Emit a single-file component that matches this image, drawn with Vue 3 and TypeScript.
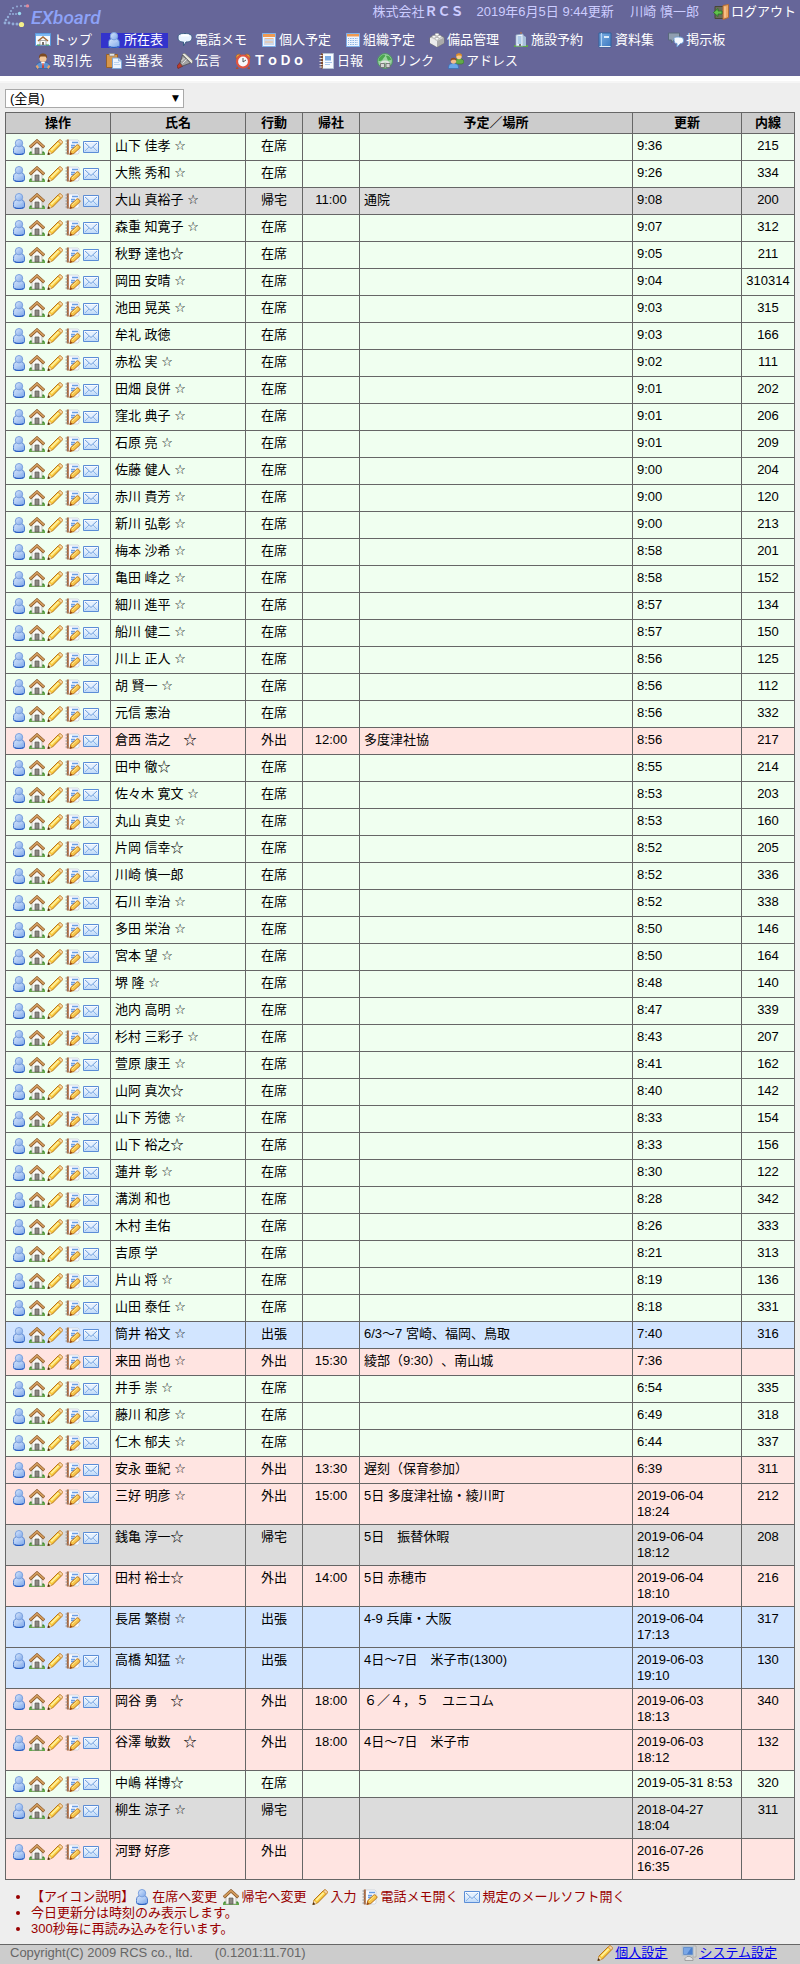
<script setup lang="ts">
import { ref } from 'vue'

type State = '在席' | '帰宅' | '外出' | '出張'
interface Member {
  name: string
  state: State
  back: string
  plan: string
  updated: string
  ext: string
  mail: boolean
}
interface NavItem {
  icon: string
  label: string
  active?: boolean
  strong?: boolean
}

const navRows: NavItem[][] = [
  [
    { icon: 'top', label: 'トップ' },
    { icon: 'person', label: '所在表', active: true },
    { icon: 'balloon', label: '電話メモ' },
    { icon: 'calendar', label: '個人予定' },
    { icon: 'group-calendar', label: '組織予定' },
    { icon: 'brick', label: '備品管理' },
    { icon: 'building', label: '施設予約' },
    { icon: 'book', label: '資料集' },
    { icon: 'talk', label: '掲示板' },
  ],
  [
    { icon: 'client', label: '取引先' },
    { icon: 'clipboard', label: '当番表' },
    { icon: 'torch', label: '伝言' },
    { icon: 'alarm', label: 'ＴｏＤｏ', strong: true },
    { icon: 'report', label: '日報' },
    { icon: 'globe', label: 'リンク' },
    { icon: 'people', label: 'アドレス' },
  ],
]

const actions = [
  { icon: 'person', label: '在席へ変更' },
  { icon: 'house', label: '帰宅へ変更' },
  { icon: 'pencil', label: '入力' },
  { icon: 'memo', label: '電話メモ開く' },
]
const legend = [...actions, { icon: 'mail', label: '規定のメールソフト開く' }]

const group = ref('all')

const m = (
  name: string,
  updated: string,
  ext: string,
  state: State = '在席',
  back = '',
  plan = '',
  mail = true,
): Member => ({ name, state, back, plan, updated, ext, mail })

// A "*" at the end of a name stands for the small star mark.
const members: Member[] = [
  m('山下 佳孝 *', '9:36', '215'),
  m('大熊 秀和 *', '9:26', '334'),
  m('大山 真裕子 *', '9:08', '200', '帰宅', '11:00', '通院'),
  m('森重 知寛子 *', '9:07', '312'),
  m('秋野 達也☆', '9:05', '211'),
  m('岡田 安晴 *', '9:04', '310314'),
  m('池田 晃英 *', '9:03', '315'),
  m('牟礼 政徳', '9:03', '166'),
  m('赤松 実 *', '9:02', '111'),
  m('田畑 良併 *', '9:01', '202'),
  m('窪北 典子 *', '9:01', '206'),
  m('石原 亮 *', '9:01', '209'),
  m('佐藤 健人 *', '9:00', '204'),
  m('赤川 貴芳 *', '9:00', '120'),
  m('新川 弘彰 *', '9:00', '213'),
  m('梅本 沙希 *', '8:58', '201'),
  m('亀田 峰之 *', '8:58', '152'),
  m('細川 進平 *', '8:57', '134'),
  m('船川 健二 *', '8:57', '150'),
  m('川上 正人 *', '8:56', '125'),
  m('胡 賢一 *', '8:56', '112'),
  m('元信 憲治', '8:56', '332'),
  m('倉西 浩之　☆', '8:56', '217', '外出', '12:00', '多度津社協'),
  m('田中 徹☆', '8:55', '214'),
  m('佐々木 寛文 *', '8:53', '203'),
  m('丸山 真史 *', '8:53', '160'),
  m('片岡 信幸☆', '8:52', '205'),
  m('川崎 慎一郎', '8:52', '336'),
  m('石川 幸治 *', '8:52', '338'),
  m('多田 栄治 *', '8:50', '146'),
  m('宮本 望 *', '8:50', '164'),
  m('堺 隆 *', '8:48', '140'),
  m('池内 高明 *', '8:47', '339'),
  m('杉村 三彩子 *', '8:43', '207'),
  m('萱原 康王 *', '8:41', '162'),
  m('山阿 真次☆', '8:40', '142'),
  m('山下 芳徳 *', '8:33', '154'),
  m('山下 裕之☆', '8:33', '156'),
  m('蓮井 彰 *', '8:30', '122'),
  m('溝渕 和也', '8:28', '342'),
  m('木村 圭佑', '8:26', '333'),
  m('吉原 学', '8:21', '313'),
  m('片山 将 *', '8:19', '136'),
  m('山田 泰任 *', '8:18', '331'),
  m('筒井 裕文 *', '7:40', '316', '出張', '', '6/3～7 宮崎、福岡、鳥取'),
  m('来田 尚也 *', '7:36', '', '外出', '15:30', '綾部（9:30）、南山城'),
  m('井手 崇 *', '6:54', '335'),
  m('藤川 和彦 *', '6:49', '318'),
  m('仁木 郁夫 *', '6:44', '337'),
  m('安永 亜紀 *', '6:39', '311', '外出', '13:30', '遅刻（保育参加）'),
  m('三好 明彦 *', '2019-06-04 18:24', '212', '外出', '15:00', '5日 多度津社協・綾川町'),
  m('銭亀 淳一☆', '2019-06-04 18:12', '208', '帰宅', '', '5日　振替休暇'),
  m('田村 裕士☆', '2019-06-04 18:10', '216', '外出', '14:00', '5日 赤穂市'),
  m('長居 繁樹 *', '2019-06-04 17:13', '317', '出張', '', '4-9 兵庫・大阪', false),
  m('高橋 知猛 *', '2019-06-03 19:10', '130', '出張', '', '4日～7日　米子市(1300)'),
  m('岡谷 勇　☆', '2019-06-03 18:13', '340', '外出', '18:00', '６／４，５　ユニコム'),
  m('谷澤 敏数　☆', '2019-06-03 18:12', '132', '外出', '18:00', '4日～7日　米子市'),
  m('中嶋 祥博☆', '2019-05-31 8:53', '320'),
  m('柳生 涼子 *', '2018-04-27 18:04', '311', '帰宅'),
  m('河野 好彦', '2016-07-26 16:35', '', '外出'),
]

const rowClass: Record<State, string> = {
  在席: 'present',
  帰宅: 'home',
  外出: 'out',
  出張: 'trip',
}
</script>

<template>
  <div class="page">
    <svg class="sprite" aria-hidden="true">
      <defs>
        <linearGradient id="g-blue" x1="0" y1="0" x2="1" y2="1">
          <stop offset="0" stop-color="#dbe9fc" />
          <stop offset="1" stop-color="#7ba6ea" />
        </linearGradient>
        <linearGradient id="g-mail" x1="0" y1="0" x2="0" y2="1">
          <stop offset="0" stop-color="#ffffff" />
          <stop offset="1" stop-color="#bcd8f8" />
        </linearGradient>
        <linearGradient id="g-book" x1="0" y1="0" x2="1" y2="1">
          <stop offset="0" stop-color="#7fb0e4" />
          <stop offset="1" stop-color="#3c78c0" />
        </linearGradient>
      </defs>
      <symbol id="i-person" viewBox="0 0 16 16">
        <path d="M5.500 6.500C3 7.500 2.500 9 2.500 11.500V13c0 2 1.500 2.500 3.500 2.500h4.500c2 0 3-.8 3-2.500v-2c0-2-1-3.700-3-4.500z" fill="url(#g-blue)" stroke="#4c7bce" />
        <circle cx="8" cy="4.200" r="3.700" fill="url(#g-blue)" stroke="#7ba1de" />
        <path d="M3.500 14.500c2 1.200 7 1.200 9 0" fill="none" stroke="#1f55bd" />
        <path d="M5 9c1.500 1.500 4.500 1.500 6 0" fill="none" stroke="#b7d0f6" />
      </symbol>
      <symbol id="i-house" viewBox="0 0 16 16">
        <path d="M0 14h16v2H0z" fill="#63a64a" />
        <path d="M0 14l2-2 2 2zM12 14l2-2 2 2z" fill="#3f8c34" />
        <path d="M3 7.500L8 3l5 4.500V15H3z" fill="#f7f7f4" stroke="#a9a9a0" stroke-width=".7" />
        <path d="M6 9h4v6H6z" fill="#8d8983" stroke="#5c5a55" stroke-width=".7" />
        <path d="M.8 8.300L8 1.900l7.200 6.400" fill="none" stroke="#7b4a1e" stroke-width="3" />
        <path d="M1 8L8 1.800 15 8" fill="none" stroke="#d09a5c" stroke-width="2" />
      </symbol>
      <symbol id="i-pencil" viewBox="0 0 16 16">
        <path d="M1 15.500L2 11 11.500 1.500c1-1 2-.8 3 .2s1 2 .2 3L5.500 14z" fill="#f8c93c" stroke="#b7741a" />
        <path d="M3.500 10.800L11 3.300l1.300 1.300-7.500 7.500z" fill="#fff09a" />
        <path d="M11.300 2l1.500-1c1.200-.3 2.700 1 2.500 2.500l-1 1.500z" fill="#f8d8ae" stroke="#c98b42" stroke-width=".7" />
        <path d="M1 15.500L2 11.500l2.800 2.800z" fill="#f3dbb8" />
        <path d="M.5 16l.8-3 2 2.200z" fill="#4a2b0c" />
      </symbol>
      <symbol id="i-memo" viewBox="0 0 16 16">
        <path d="M3 1h10l1 1v12l-1 1H3z" fill="#f7faff" stroke="#c4cbd8" stroke-width=".7" />
        <path d="M7 3.500h6M6 6.500h4M6 8.500h3" stroke="#6a9de4" stroke-width="1.600" />
        <path d="M2.800.5v15" stroke="#a86032" stroke-width="1.900" />
        <path d="M.5 2h2.300M.5 5h2.300M.5 8h2.300M.5 11h2.300M.5 14h2.300" stroke="#8c8c8c" />
        <path d="M5 15.500l.8-4 6-5.500c1-.9 4 1.500 3 3l-6 5.500z" fill="#f7c44a" stroke="#b7701c" />
        <path d="M7 12l5.500-5" stroke="#fff09a" />
        <path d="M4.500 16l.9-3 2 1.800z" fill="#9b4a18" />
      </symbol>
      <symbol id="i-mail" viewBox="0 0 16 16">
        <path d="M.5 2.500h15v11H.5z" fill="url(#g-mail)" stroke="#5b8dd6" />
        <path d="M2 12l4-4M14 12l-4-4" stroke="#8db5e9" fill="none" />
        <path d="M2 4l6 5.500L14 4" stroke="#6f9fdd" fill="#e4f0fe" />
      </symbol>
      <symbol id="i-top" viewBox="0 0 16 16">
        <path d="M.5 1.500h15v12H.5z" fill="#f5faff" stroke="#5a9adf" />
        <path d="M1 2h14v2H1z" fill="#7db8f2" />
        <path d="M5 8.500h6V13H5z" fill="#fff" stroke="#888" stroke-width=".7" />
        <path d="M7 10h2v3H7z" fill="#77706a" />
        <path d="M3 9l5-4 5 4" fill="none" stroke="#a36a36" stroke-width="1.600" />
        <path d="M2 12.500h3v1H2zM11 12.500h3v1h-3z" fill="#4b9a3a" />
      </symbol>
      <symbol id="i-balloon" viewBox="0 0 16 16">
        <path d="M1 5c0-3 3-3.500 7-3.500S15 2.500 15 5.500 13 10 9 10l-2.500 4v-4C3 10 1 9 1 5z" fill="#eaf4ff" stroke="#3d5f86" />
        <path d="M4 3.500h8" stroke="#fff" stroke-width="2" />
      </symbol>
      <symbol id="i-calendar" viewBox="0 0 16 16">
        <path d="M1.500 1.500h13v13h-13z" fill="#f2f7ff" stroke="#7eb0ea" />
        <path d="M2 2h12v3H2z" fill="#ee9a52" />
        <path d="M4 6v7M6 6v7M8 6v7M10 6v7M12 6v7" stroke="#a7bbd7" />
        <path d="M4 6.500h8M4 10h8" stroke="#f4be8c" />
      </symbol>
      <symbol id="i-group-calendar" viewBox="0 0 16 16">
        <path d="M1.500 1.500h13v13h-13z" fill="#f2f7ff" stroke="#7eb0ea" />
        <path d="M2 2h12v2.500H2z" fill="#ee9a52" />
        <path d="M3 6.500h10M3 8.500h10M3 10.500h10M3 12.500h10" stroke="#8fb7e4" />
        <path d="M4.500 5v9M7 5v9M9.500 5v9M12 5v9" stroke="#e8f1fd" />
      </symbol>
      <symbol id="i-brick" viewBox="0 0 16 16">
        <path d="M1 5.500L8 2l7 3.500V11l-7 4-7-4z" fill="#dcdcdc" stroke="#777" />
        <path d="M1 5.500L8 9v6l-7-4z" fill="#ececec" />
        <path d="M8 9l7-3.500V11l-7 4z" fill="#aaa" />
        <ellipse cx="5" cy="4.800" rx="2" ry="1.300" fill="#fff" stroke="#999" stroke-width=".6" />
        <ellipse cx="10.500" cy="4.800" rx="2" ry="1.300" fill="#fff" stroke="#999" stroke-width=".6" />
        <ellipse cx="8" cy="2.600" rx="2" ry="1.300" fill="#fff" stroke="#999" stroke-width=".6" />
        <ellipse cx="8" cy="6.800" rx="2" ry="1.300" fill="#fff" stroke="#999" stroke-width=".6" />
      </symbol>
      <symbol id="i-building" viewBox="0 0 16 16">
        <path d="M1 13h14v2H1z" fill="#5fa64b" />
        <path d="M3 3l7-1v12H3z" fill="#eef5fc" stroke="#8fa9c5" stroke-width=".8" />
        <path d="M10 3l3 2v9h-3z" fill="#a7bfd9" />
        <path d="M4.500 5h4M4.500 7h4M4.500 9h4M4.500 11h4" stroke="#6c9fd6" />
        <path d="M8 0v2" stroke="#c77c42" />
        <path d="M6 12h2v2H6z" fill="#777" />
      </symbol>
      <symbol id="i-book" viewBox="0 0 16 16">
        <path d="M2 1h12v14H2z" fill="url(#g-book)" stroke="#2f629f" />
        <path d="M4.500 1v14" stroke="#b4d3f2" />
        <path d="M7 4h5v2H7z" fill="#dcebfa" />
        <path d="M2.500 14.500h11" stroke="#e6eef6" />
      </symbol>
      <symbol id="i-talk" viewBox="0 0 16 16">
        <path d="M.5 1h11v7H6l-2.500 3V8h-3z" fill="#8f9eb0" stroke="#59697c" />
        <path d="M6 6.500c0-1 1-1.500 4.500-1.500s5 .8 5 3.300-1 3.200-3 3.200L9 15v-3.500C6.500 11.500 6 10 6 6.500z" fill="#f4f9ff" stroke="#6f9ed6" />
      </symbol>
      <symbol id="i-client" viewBox="0 0 16 16">
        <path d="M1 14c0-3.500 3-5 7-5s7 1.500 7 5v1.500H1z" fill="#5f93d2" stroke="#39659f" stroke-width=".8" />
        <path d="M6 9l2 4 2-4z" fill="#fff" />
        <path d="M7.500 10h1L9 15H7z" fill="#cf3d2a" />
        <circle cx="8" cy="5.500" r="3.600" fill="#f3c79a" />
        <path d="M4 5.500C3.500 1.500 6 .5 8 .5s4.800 1 4 5L10.500 3.500h-5z" fill="#7c4a22" />
        <path d="M.5 13l2-1 1.500 2.500L2.500 16zM15.500 13l-2-1-1.500 2.500 1.500 1.500z" fill="#e9a26b" />
      </symbol>
      <symbol id="i-clipboard" viewBox="0 0 16 16">
        <path d="M.5 1.500h11v13H.5z" fill="#d6964a" stroke="#96602a" />
        <path d="M3.500.5h5v2.500h-5z" fill="#e4e4e4" stroke="#888" stroke-width=".7" />
        <path d="M6.500 5h6l3 3v7.500h-9z" fill="#edf5ff" stroke="#7ea7d8" />
        <path d="M12.500 5v3h3" fill="#bdd7f4" stroke="#7ea7d8" stroke-width=".7" />
        <path d="M8 9.500h5M8 11.500h6" stroke="#bcd4ef" />
      </symbol>
      <symbol id="i-torch" viewBox="0 0 16 16">
        <path d="M1 15.500L0 13l3-3.500L6 13z" fill="#bd3a2c" stroke="#712820" stroke-width=".7" />
        <path d="M3 10L5.500 2l8 8-8 3z" fill="#a3a3a3" stroke="#505050" stroke-width=".8" />
        <path d="M5.500 1.500c.8-1.500 2-1.500 3-.5l6.500 6c1 1 1 2.500-.5 3.500z" fill="#e8e8dc" stroke="#747474" stroke-width=".8" />
        <path d="M4.500 8l3-3M5.500 10.500l4-4" stroke="#e0e0e0" />
      </symbol>
      <symbol id="i-alarm" viewBox="0 0 16 16">
        <path d="M1 5.500C.5 2 3 .5 5.500 1.500zM15 5.500C15.500 2 13 .5 10.500 1.500z" fill="#ee9d3f" stroke="#a95f1b" stroke-width=".7" />
        <path d="M2 13.500L.8 16h3zM14 13.500l1.200 2.500h-3z" fill="#b34c28" />
        <circle cx="8" cy="8.500" r="6" fill="#f7fafc" stroke="#e2543f" stroke-width="2.200" />
        <path d="M8 5v4l3-2" fill="none" stroke="#555" />
      </symbol>
      <symbol id="i-report" viewBox="0 0 16 16">
        <path d="M3.500.5h11v15h-11z" fill="#f8fbff" stroke="#b3c1d3" />
        <path d="M6 3h6v4.500H6z" fill="#79abe5" />
        <path d="M6 9.500h7M6 11.500h5" stroke="#a8c6ea" />
        <path d="M3 .5v15" stroke="#7d4b2e" stroke-width="2" />
        <path d="M.5 2.500h3M.5 5.500h3M.5 8.500h3M.5 11.500h3M.5 14h3" stroke="#e6e1d8" />
      </symbol>
      <symbol id="i-globe" viewBox="0 0 16 16">
        <circle cx="8" cy="8" r="7.400" fill="#9bd3a0" stroke="#4c9663" />
        <path d="M2 5c2-3 5-4 6-3S7 4 6 6 3 8 1.500 8zM9 3c3-1 5 2 5 4l-3 .5z" fill="#4ba650" />
        <path d="M4 11.500c0-2 1-3 4-3s4 1 4 3" fill="none" stroke="#e4e4e4" stroke-width="1.800" />
        <path d="M3.500 10.500h4v4h-4zM9 10.500h4v4H9z" fill="#d5d5d5" stroke="#686868" stroke-width=".8" />
      </symbol>
      <symbol id="i-people" viewBox="0 0 16 16">
        <path d="M7 9c0-2.500 1.500-3.500 4-3.500s5 1 5 4l-2 1.500H8z" fill="#62ab48" stroke="#3c7a2c" stroke-width=".7" />
        <circle cx="11" cy="3.500" r="2.700" fill="#f5cc8f" />
        <path d="M8 3.500C7.800 1 9 .3 11 .3s3.200.9 3 3.200L12.500 2.500H10z" fill="#dc8d28" />
        <path d="M.5 15.500c-.2-4 1.500-5 5-5s5.200 1 5 5z" fill="#6aa7ea" stroke="#356fb5" stroke-width=".7" />
        <circle cx="5.500" cy="8" r="2.700" fill="#f3bd8e" />
        <path d="M2.500 8c-.2-2.500 1-3.200 3-3.200s3.200.8 3 3.200L7 6.800H4.500z" fill="#8e4d20" />
      </symbol>
      <symbol id="i-exit" viewBox="0 0 16 16">
        <path d="M2 2.500h9v12H2z" fill="#6a6a5b" stroke="#474735" />
        <path d="M10 1.500L15.500.5v13L10 15.500z" fill="#eda765" stroke="#b16b35" />
        <path d="M12 2.500v11" stroke="#ffd5a4" />
        <path d="M.5 8.500L5 4.500V7h4v3H5v2.500z" fill="#62c14d" stroke="#267326" stroke-width=".8" />
      </symbol>
      <symbol id="i-system" viewBox="0 0 16 16">
        <path d="M12 1h3v11h-3z" fill="#dadada" stroke="#999" stroke-width=".6" />
        <path d="M1.500 1.500h11v9h-11z" fill="#4b80cf" stroke="#b7c2cc" stroke-width="1.600" />
        <path d="M3 3h7l-4 6H3z" fill="#7aa7e6" />
        <path d="M6 11.500h3l3 2v2H4v-2z" fill="#e2e2e2" stroke="#8c8c8c" stroke-width=".7" />
      </symbol>
    </svg>

    <header class="header">
      <div class="bar">
        <a class="logo" href="#" aria-label="EXboard">
          <svg class="logo-mark" viewBox="0 0 28 24" aria-hidden="true">
            <g fill="#93add8">
              <circle cx="10" cy="4" r="1" /><circle cx="14" cy="2.500" r="1" /><circle cx="18" cy="2" r="1" /><circle cx="22" cy="2" r="1" />
              <circle cx="8" cy="7" r="1.100" /><circle cx="7" cy="10" r="1.100" />
              <circle cx="10" cy="10" r="1.100" /><circle cx="13" cy="10" r="1" /><circle cx="5" cy="13" r="1.200" />
              <circle cx="3" cy="16" r="1.300" /><circle cx="2" cy="19" r="1.400" />
              <circle cx="6" cy="19" r="1.400" /><circle cx="10" cy="20" r="1.400" /><circle cx="14" cy="20" r="1.500" />
            </g>
            <circle cx="16.500" cy="9.500" r="1.700" fill="#9ad9f0" />
            <circle cx="24.500" cy="1.900" r="1.700" fill="#e28a9a" />
            <circle cx="18.500" cy="20.500" r="2.600" fill="#f5f08a" />
          </svg>
          <span class="logo-text">EXboard</span>
        </a>
        <div class="account">
          <span>株式会社<b>ＲＣＳ</b>　2019年6月5日 9:44更新　 川崎 慎一郎</span>
          <a class="logout" href="#"><svg class="icon"><use href="#i-exit" /></svg>ログアウト</a>
        </div>
      </div>
      <nav class="nav" aria-label="メニュー">
        <div v-for="(row, i) in navRows" :key="i" class="nav-row">
          <a v-for="item in row" :key="item.label" href="#" class="nav-item" :class="{ active: item.active, strong: item.strong }">
            <svg class="icon"><use :href="'#i-' + item.icon" /></svg><span>{{ item.label }}</span>
          </a>
        </div>
      </nav>
    </header>
    <div class="stripe"></div>

    <main class="main">
      <div class="picker">
        <select v-model="group" aria-label="組織">
          <option value="all">(全員)</option>
        </select>
      </div>

      <table class="board">
        <colgroup>
          <col class="c-ops" /><col class="c-name" /><col class="c-state" /><col class="c-back" /><col /><col class="c-time" /><col class="c-ext" />
        </colgroup>
        <thead>
          <tr>
            <th>操作</th><th>氏名</th><th>行動</th><th>帰社</th><th>予定／場所</th><th>更新</th><th>内線</th>
          </tr>
        </thead>
        <tbody>
          <tr v-for="p in members" :key="p.name" :class="rowClass[p.state]">
            <td class="ops">
              <div class="tools">
                <button v-for="a in actions" :key="a.icon" type="button" :aria-label="a.label">
                  <svg class="icon"><use :href="'#i-' + a.icon" /></svg>
                </button>
                <a v-if="p.mail" href="#" aria-label="メール"><svg class="icon"><use href="#i-mail" /></svg></a>
              </div>
            </td>
            <td>{{ p.name.replace('*', '') }}<span v-if="p.name.endsWith('*')" class="star">☆</span></td>
            <td class="center">{{ p.state }}</td>
            <td class="center">{{ p.back }}</td>
            <td>{{ p.plan }}</td>
            <td>{{ p.updated }}</td>
            <td class="center">{{ p.ext }}</td>
          </tr>
        </tbody>
      </table>

      <ul class="notes">
        <li>
          <div class="legend">
            <span>【アイコン説明】</span>
            <span v-for="l in legend" :key="l.icon" class="legend-item"><svg class="icon"><use :href="'#i-' + l.icon" /></svg>{{ l.label }}</span>
          </div>
        </li>
        <li>今日更新分は時刻のみ表示します。</li>
        <li>300秒毎に再読み込みを行います。</li>
      </ul>
    </main>

    <footer class="footer">
      <div class="copy"><span>Copyright(C) 2009 RCS co., ltd.</span><span>(0.1201:11.701)</span></div>
      <div class="settings">
        <a href="#"><svg class="icon"><use href="#i-pencil" /></svg><span>個人設定</span></a>
        <a href="#"><svg class="icon"><use href="#i-system" /></svg><span>システム設定</span></a>
      </div>
    </footer>
  </div>
</template>

<style>
body {
  margin: 0;
  background: #eee;
}
</style>

<style scoped>
.page {
  color: #000;
  font: 13px/16px "Liberation Sans", "Noto Sans CJK JP", sans-serif;
  text-spacing-trim: space-all;
}
.sprite {
  position: absolute;
  width: 0;
  height: 0;
}
.icon {
  display: block;
  flex: none;
  width: 16px;
  height: 16px;
}
.header {
  background: #669;
  padding-bottom: 7px;
}
.bar {
  display: flex;
  justify-content: space-between;
  align-items: flex-start;
  height: 31px;
  padding: 0 4px 0 3px;
}
.logo {
  display: flex;
  padding-top: 4px;
  text-decoration: none;
}
.logo-mark {
  width: 28px;
  height: 24px;
}
.logo-text {
  color: #8da2f8;
  font: italic 500 19px/28px Roboto, "Liberation Sans", sans-serif;
}
.account {
  display: flex;
  gap: 14px;
  padding-top: 4px;
  color: #ccf;
  white-space: pre;
}
.logout {
  display: flex;
  gap: 2px;
  color: #fff;
  text-decoration: none;
}
.nav {
  display: flex;
  flex-direction: column;
  gap: 4px;
  padding-left: 30px;
}
.nav-row {
  display: flex;
  flex-wrap: wrap;
  gap: 4px;
}
.nav-item {
  display: flex;
  align-items: flex-end;
  gap: 2px;
  padding: 0 5px;
  height: 17px;
  color: #fff;
  white-space: nowrap;
  text-decoration: none;
}
.nav-item.active {
  background: linear-gradient(#33c, #33c) 0 100% / 100% 15px no-repeat;
}
.nav-item.strong {
  font-weight: bold;
}
.stripe {
  height: 7px;
  background: linear-gradient(#fff 5px, #f6f6f6 5px);
}
.main {
  padding: 6px 5px 7px;
}
.picker {
  position: relative;
  width: 179px;
  margin-bottom: 4px;
}
.picker::after {
  content: "▼";
  position: absolute;
  right: 5px;
  top: 1px;
  font: 9px/16px "DejaVu Sans", sans-serif;
  pointer-events: none;
}
.picker select {
  display: block;
  appearance: none;
  width: 100%;
  height: 19px;
  padding: 0 4px;
  border: 1px solid #a9a9a9;
  border-radius: 0;
  background: #fff;
  color: #000;
  font: inherit;
}
.board {
  width: 100%;
  table-layout: fixed;
  border-collapse: collapse;
}
.c-ops { width: 105px; }
.c-name { width: 135px; }
.c-state,
.c-back { width: 57px; }
.c-time { width: 109px; }
.c-ext { width: 53px; }
.board th,
.board td {
  border: 1px solid #666;
  padding: 4px;
  text-align: left;
  vertical-align: top;
}
.board th {
  padding: 2px 4px;
  background: #ccc;
  text-align: center;
}
.board .ops {
  padding: 5px;
}
.board .center {
  text-align: center;
}
.present { background: #f0fff0; }
.home { background: #dcdcdc; }
.out { background: #ffe4e1; }
.trip { background: #d2e5ff; }
.tools {
  display: flex;
  gap: 2px;
}
.tools button {
  border: 0;
  padding: 0;
  background: none;
  cursor: pointer;
}
.star {
  font: 13px/16px "DejaVu Sans", sans-serif;
}
.notes {
  margin: 9px 0 0;
  padding-left: 26px;
  color: #900;
}
.legend {
  display: flex;
  flex-wrap: wrap;
  gap: 0 6px;
}
.legend > span:first-child {
  margin-right: -6px;
}
.legend-item {
  display: flex;
  gap: 2px;
}
.footer {
  display: flex;
  justify-content: space-between;
  border-top: 1px solid #666;
  padding: 0 23px 3px 10px;
  background: #ccc;
  color: #666;
}
.copy {
  display: flex;
  gap: 22px;
}
.settings {
  display: flex;
  gap: 14px;
}
.settings a {
  display: flex;
  align-items: center;
  gap: 2px;
  color: #00e;
}
.settings span {
  text-decoration: underline;
}
</style>
